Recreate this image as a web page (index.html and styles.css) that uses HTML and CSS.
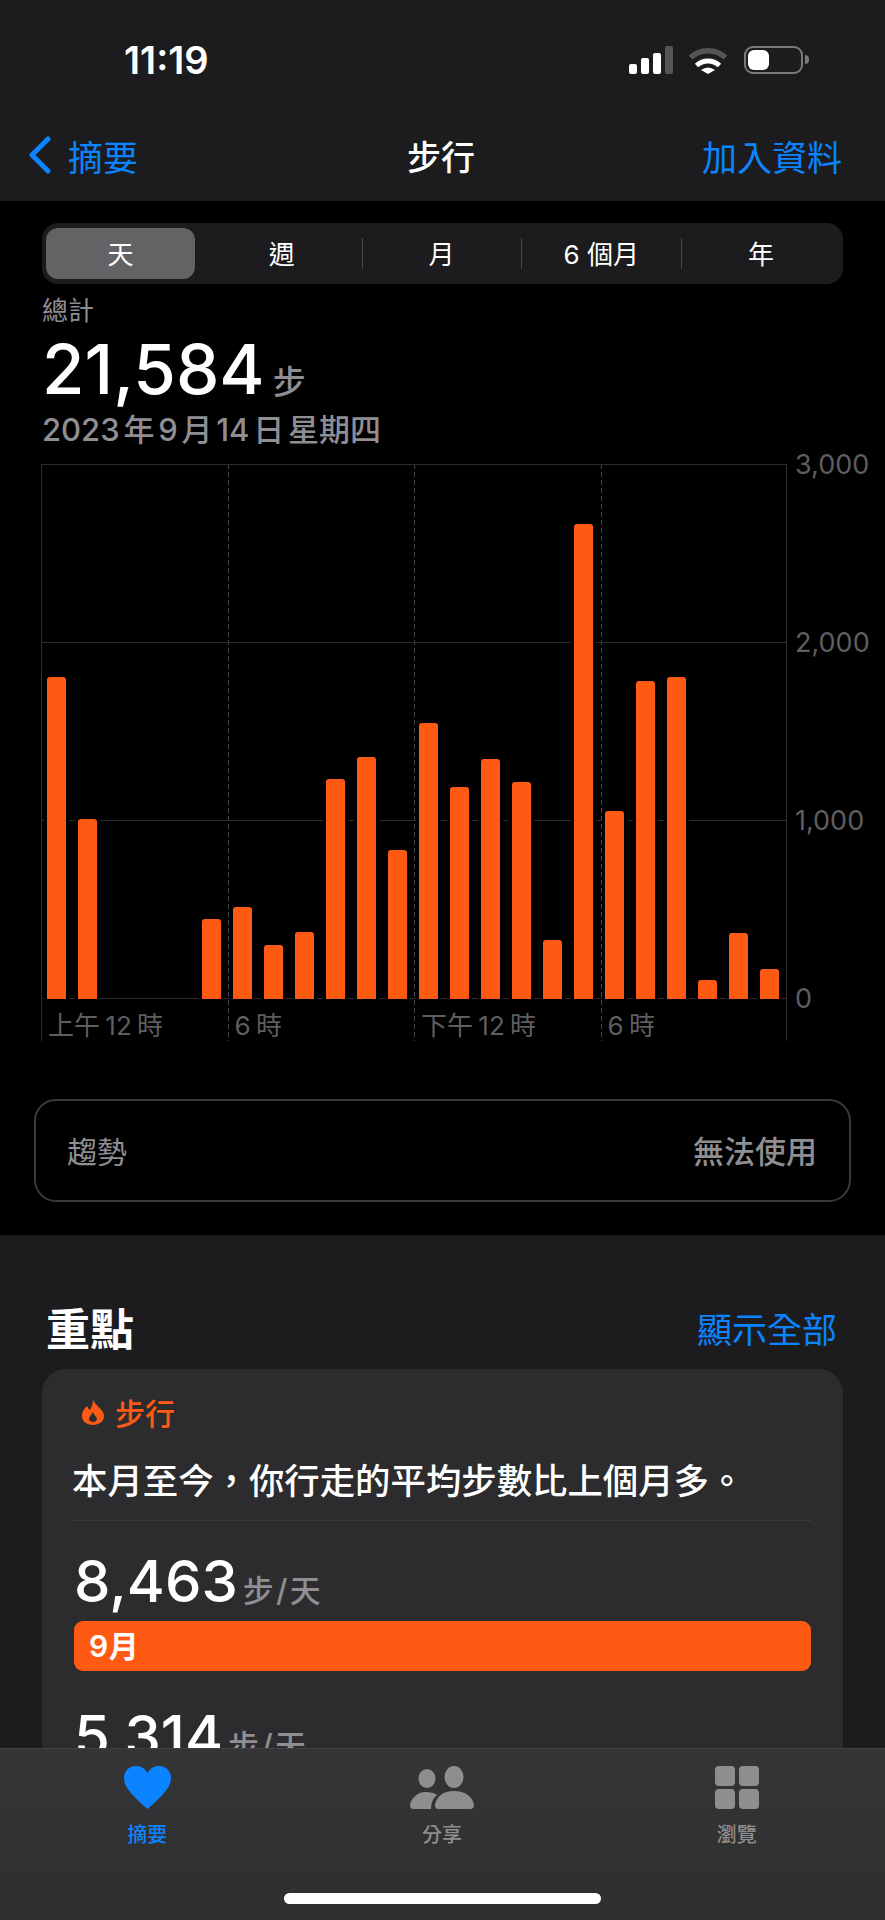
FILE: index.html
```html
<!DOCTYPE html>
<html lang="zh-Hant">
<head>
    <meta charset="UTF-8">
    <meta name="viewport" content="width=device-width, initial-scale=1.0">
    <title>步行</title>
    <link rel="stylesheet" href="styles.css">
</head>
<body>
    <div class="phone">
        <header class="top">
            <div class="status">
                <span class="time">11:19</span>
                <div class="status-icons">
                    <div class="signal">
                        <span class="s1"></span>
                        <span class="s2"></span>
                        <span class="s3"></span>
                        <span class="s4"></span>
                    </div>
                    <svg class="wifi" width="40" height="27" viewBox="0 0 40 27">
                        <path d="M2.5 10.5A26 26 0 0 1 37.5 10.5" fill="none" stroke="#555" stroke-width="5.5"/>
                        <path d="M8.5 18.5A17 17 0 0 1 31.5 18.5" fill="none" stroke="#fff" stroke-width="5"/>
                        <path d="M13 23Q20 18 27 23L20 27Z" fill="#fff"/>
                    </svg>
                    <div class="battery"><span class="charge"></span></div>
                </div>
            </div>
            <nav class="nav">
                <a class="back" href="#">
                    <svg width="23" height="38" viewBox="0 0 23 38">
                        <path d="M20 3L4 19L20 35" fill="none" stroke="#0a84ff" stroke-width="5" stroke-linecap="round" stroke-linejoin="round"/>
                    </svg>
                    摘要
                </a>
                <span class="nav-title">步行</span>
                <a class="nav-add" href="#">加入資料</a>
            </nav>
        </header>

        <div class="content">
            <main class="detail">
                <div class="segment">
                    <div class="seg on"><span>天</span></div>
                    <div class="seg"><span>週</span></div>
                    <div class="seg"><span>月</span></div>
                    <div class="seg"><span>6 個月</span></div>
                    <div class="seg"><span>年</span></div>
                </div>

                <div class="total-label">總計</div>
                <div class="total"><b>21,584</b> <span>步</span></div>
                <div class="date">2023 年 9 月 14 日 星期四</div>

                <div class="chart">
                    <div class="plot">
                        <div class="vlines"><i></i><i></i><i></i><i></i></div>
                        <div class="bar-area">
                            <div class="hlines"><i></i><i></i><i></i><i></i></div>
                            <div class="bars">
                                <span style="height:322px"></span>
                                <span style="height:180px"></span>
                                <span class="none"></span>
                                <span class="none"></span>
                                <span class="none"></span>
                                <span style="height:80px"></span>
                                <span style="height:92px"></span>
                                <span style="height:54px"></span>
                                <span style="height:67px"></span>
                                <span style="height:220px"></span>
                                <span style="height:242px"></span>
                                <span style="height:149px"></span>
                                <span style="height:276px"></span>
                                <span style="height:212px"></span>
                                <span style="height:240px"></span>
                                <span style="height:217px"></span>
                                <span style="height:59px"></span>
                                <span style="height:475px"></span>
                                <span style="height:188px"></span>
                                <span style="height:318px"></span>
                                <span style="height:322px"></span>
                                <span style="height:19px"></span>
                                <span style="height:66px"></span>
                                <span style="height:30px"></span>
                            </div>
                        </div>
                        <div class="hours">
                            <span>上午 12 時</span>
                            <span>6 時</span>
                            <span>下午 12 時</span>
                            <span>6 時</span>
                        </div>
                    </div>
                    <div class="axis">
                        <span>3,000</span>
                        <span>2,000</span>
                        <span>1,000</span>
                        <span>0</span>
                    </div>
                </div>

                <div class="trend">
                    <span class="trend-name">趨勢</span>
                    <span class="trend-state">無法使用</span>
                </div>
            </main>

            <section class="highlights">
                <div class="section-head">
                    <h2>重點</h2>
                    <a href="#">顯示全部</a>
                </div>
                <div class="card">
                    <div class="card-tag">
                        <svg width="22" height="26" viewBox="0 0 22 26">
                            <path fill-rule="evenodd" d="M11 0C12 6 22 10 22 17C22 22.5 17 26 11 26C5 26 0 22.5 0 17C0 12 3 9 5 7C6 9 6.5 10 8 11C10 8 11 4 11 0ZM11 13C9 16 7 18 7 20C7 22 9 23 11 23C13 23 15 22 15 20C15 18 12 16 11 13Z" fill="#ff5a14"/>
                        </svg>
                        步行
                    </div>
                    <p class="card-text">本月至今&#xFF0C;你行走的平均步數比上個月多。</p>
                    <div class="stat">
                        <div class="stat-num"><b>8,463</b> <span>步 / 天</span></div>
                        <div class="month-bar">9 月</div>
                    </div>
                    <div class="stat">
                        <div class="stat-num"><b>5,314</b> <span>步 / 天</span></div>
                    </div>
                </div>
            </section>
        </div>

        <footer class="tabs">
            <div class="tab active">
                <svg width="47" height="43" viewBox="0 0 47 43">
                    <path d="M23.5 43C10 31 0 22 0 12C0 5 5 0 12 0C17 0 21 2.5 23.5 7C26 2.5 30 0 35 0C42 0 47 5 47 12C47 22 37 31 23.5 43Z" fill="#0a84ff"/>
                </svg>
                <span>摘要</span>
            </div>
            <div class="tab">
                <svg width="64" height="43" viewBox="0 0 64 43">
                    <ellipse cx="17" cy="12.500" rx="8.500" ry="9.500" fill="#8e8e8e"/>
                    <ellipse cx="44" cy="11" rx="9.500" ry="11" fill="#8e8e8e"/>
                    <path d="M0 39C1 32 8 26 15 26C20 26 25 27 27 29C23 32 21 37 21 43H3Q0 43 0 39Z" fill="#8e8e8e"/>
                    <path d="M25 39C26 31 33 25 44 25C55 25 63 31 64 39Q64 43 60 43H28Q25 43 25 39Z" fill="#8e8e8e"/>
                </svg>
                <span>分享</span>
            </div>
            <div class="tab">
                <div class="grid-icon"><i></i><i></i><i></i><i></i></div>
                <span>瀏覽</span>
            </div>
            <div class="home-bar"></div>
        </footer>
    </div>
</body>
</html>
```

FILE: styles.css
```css
* {
    padding: 0px;
    margin: 0px;
    box-sizing: border-box;
}

body {
    background: #000;
    font-family: Inter, "Noto Sans CJK TC", sans-serif;
    color: #fff;
}

a {
    text-decoration: none;
    color: #0a84ff;
}

.phone {
    width: 885px;
    height: 1920px;
    display: flex;
    flex-direction: column;
    overflow: hidden;
    position: relative;
}

/* status bar + nav */
.top {
    background: #1c1c1e;
    height: 201px;
    flex: none;
}

.status {
    height: 40px;
    margin-top: 40px;
    padding: 0 82px 0 124px;
    display: flex;
    justify-content: space-between;
    align-items: center;
}

.time {
    font-size: 38px;
    font-weight: 600;
    letter-spacing: 0;
}

.status-icons {
    display: flex;
    align-items: flex-end;
    height: 28px;
    margin-top: -1px;
}

.signal {
    display: flex;
    align-items: flex-end;
    gap: 4px;
    height: 28px;
}

.signal span {
    width: 8px;
    border-radius: 2px;
    background: #fff;
}

.s1 { height: 10px; }
.s2 { height: 16px; }
.s3 { height: 21px; }
.signal .s4 { height: 28px; background: #555; }

.wifi {
    margin-left: 15px;
}

.battery {
    width: 59px;
    height: 28px;
    margin-left: 16px;
    border: 2.5px solid #7a7a7c;
    border-radius: 9px;
    padding: 2px;
    position: relative;
}

.battery::after {
    content: "";
    position: absolute;
    right: -8px;
    top: 7px;
    width: 4px;
    height: 9px;
    border-radius: 0 4px 4px 0;
    background: #7a7a7c;
}

.charge {
    display: block;
    width: 21px;
    height: 100%;
    border-radius: 6px;
    background: #fff;
}

.nav {
    height: 40px;
    margin-top: 55px;
    padding: 0 43px 0 28px;
    display: flex;
    justify-content: space-between;
    align-items: center;
    font-size: 35px;
    position: relative;
}

.back {
    display: flex;
    align-items: center;
    gap: 17px;
}

.nav-title {
    font-size: 34px;
    font-weight: 500;
    position: absolute;
    left: 407px;
}

.content {
    flex: 1;
    overflow: hidden;
}

/* chart part */
.detail {
    background: #000;
    height: 1034px;
    padding-top: 22px;
}

.segment {
    width: 801px;
    height: 61px;
    margin-left: 42px;
    padding-right: 2px;
    background: #1c1c1e;
    border-radius: 16px;
    display: grid;
    grid-template-columns: repeat(5, 1fr);
    font-size: 26px;
}

.seg {
    display: flex;
    align-items: center;
    justify-content: center;
    position: relative;
    padding-bottom: 2px;
}

.seg:nth-child(n+3)::before {
    content: "";
    position: absolute;
    left: 0;
    top: 15px;
    height: 31px;
    width: 1px;
    background: #48484a;
}

.seg.on {
    margin: 5px 7px 5px 4px;
    background: #636366;
    border-radius: 12px;
}

.total-label {
    margin: 11px 0 0 42px;
    font-size: 26px;
    line-height: 32px;
    color: #8e8e93;
}

.total {
    margin: 4px 0 0 42px;
    height: 76px;
    display: flex;
    align-items: baseline;
    gap: 8px;
    line-height: 76px;
}

.total b {
    font-size: 69px;
    font-weight: 500;
}

.total span {
    font-size: 33px;
    font-weight: 500;
    color: #8e8e93;
}

.date {
    margin: 1px 0 0 42px;
    font-size: 31px;
    line-height: 44px;
    font-weight: 500;
    color: #8e8e93;
    word-spacing: -4.500px;
}

.chart {
    margin: 12px 0 0 41px;
    display: flex;
}

.plot {
    width: 746px;
    height: 577px;
    position: relative;
}

.vlines {
    position: absolute;
    inset: 0;
    display: grid;
    grid-template-columns: repeat(4, 1fr);
}

.vlines i {
    background: repeating-linear-gradient(#444446 0 5px, transparent 5px 8px) left top / 1px 100% no-repeat;
}

.vlines i:first-child {
    background: none;
    border-left: 1px solid #2c2c2e;
}

.vlines i:last-child {
    border-right: 1px solid #2c2c2e;
}

.bar-area {
    height: 535px;
    position: relative;
}

.hlines {
    position: absolute;
    inset: 0;
    display: flex;
    flex-direction: column;
    justify-content: space-between;
}

.hlines i {
    height: 1px;
    background: #2c2c2e;
}

.bars {
    position: absolute;
    inset: 0;
    padding-left: 6px;
    display: flex;
    align-items: flex-end;
    gap: 12px;
}

.bars span {
    width: 19px;
    flex: none;
    border-radius: 3px 3px 0 0;
    background: #ff5a14;
    box-shadow: 0 0 0 3px #000;
    clip-path: inset(-3px -3px 0 -3px);
}

.bars .none {
    background: none;
    box-shadow: none;
}

.hours {
    height: 42px;
    display: grid;
    grid-template-columns: repeat(4, 1fr);
    position: relative;
    padding-top: 12px;
    font-size: 26px;
    line-height: 30px;
    color: #5e5e60;
    word-spacing: -2px;
}

.hours span {
    padding-left: 7px;
}

.axis {
    height: 535px;
    margin-left: 8px;
    display: flex;
    flex-direction: column;
    justify-content: space-between;
    font-size: 27px;
    color: #5e5e60;
}

.axis span {
    height: 1px;
    line-height: 1px;
}

.trend {
    margin: 58px 34px 0;
    height: 103px;
    padding: 0 32px 2px 31px;
    border: 2px solid #3a3a3c;
    border-radius: 22px;
    display: flex;
    justify-content: space-between;
    align-items: center;
    font-size: 30px;
    color: #8e8e93;
}

.trend-state {
    font-size: 31px;
    font-weight: 500;
}

/* highlights */
.highlights {
    background: #1c1c1e;
    height: 700px;
    padding: 67px 42px 0;
}

.section-head {
    height: 50px;
    padding: 0 6px 0 4px;
    display: flex;
    justify-content: space-between;
    align-items: center;
}

.section-head h2 {
    font-size: 44px;
    font-weight: 700;
}

.section-head a {
    font-size: 35px;
}

.card {
    margin-top: 17px;
    height: 600px;
    background: #2c2c2e;
    border-radius: 24px;
    padding: 25px 32px 0;
}

.card-tag {
    display: flex;
    align-items: center;
    gap: 11px;
    padding-left: 8px;
    height: 36px;
    font-size: 30px;
    font-weight: 500;
    color: #ff5a14;
}

.card-text {
    margin-top: 26px;
    padding-bottom: 13px;
    font-size: 35.400px;
    line-height: 51px;
    font-weight: 500;
    border-bottom: 1px solid #3a3a3c;
    white-space: nowrap;
    text-indent: -2px;
}

.stat-num {
    height: 60px;
    margin-top: 30px;
    display: flex;
    align-items: baseline;
    gap: 5px;
    line-height: 60px;
}

.stat-num b {
    font-size: 58px;
    font-weight: 500;
}

.stat-num span {
    font-size: 31px;
    font-weight: 500;
    color: #8e8e93;
    word-spacing: -6px;
}

.month-bar {
    height: 50px;
    margin-top: 10px;
    padding-left: 15px;
    background: #ff5a14;
    border-radius: 9px;
    font-size: 30px;
    font-weight: 600;
    line-height: 50px;
    word-spacing: -7px;
}

.stat + .stat {
    margin-top: 35px;
}

/* tab bar */
.tabs {
    flex: none;
    height: 172px;
    background: linear-gradient(#343537, #2f2f2f);
    border-top: 1px solid #404042;
    display: grid;
    grid-template-columns: repeat(3, 1fr);
    padding: 17px 1px 0 0;
    position: relative;
    align-items: start;
}

.tab {
    display: flex;
    flex-direction: column;
    align-items: center;
    font-size: 20px;
    line-height: 24px;
    font-weight: 500;
    color: #8e8e8e;
    gap: 14px;
}

.tab svg,
.grid-icon {
    display: block;
    height: 43px;
}

.tab.active {
    color: #0a84ff;
}

.grid-icon {
    width: 44px;
    display: grid;
    grid-template-columns: 1fr 1fr;
    gap: 3px 4px;
}

.grid-icon i {
    background: #8e8e8e;
    border-radius: 4px;
}

.home-bar {
    position: absolute;
    left: 284px;
    top: 144px;
    width: 317px;
    height: 11px;
    border-radius: 6px;
    background: #fff;
}
```
